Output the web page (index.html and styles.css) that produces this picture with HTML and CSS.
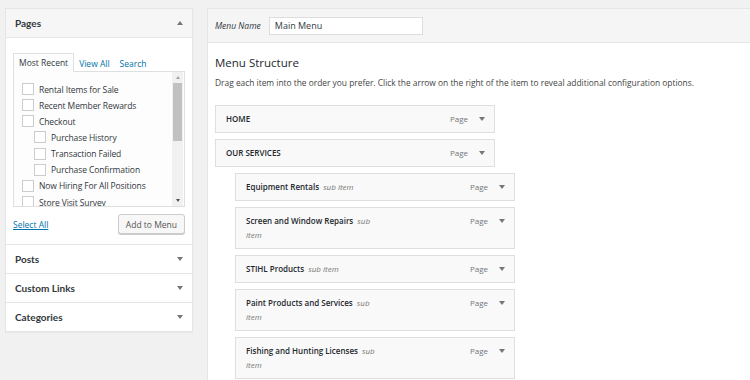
FILE: index.html
```html
<!DOCTYPE html>
<html lang="en">
<head>
    <meta charset="UTF-8">
    <title>Menus</title>
    <link rel="stylesheet" href="styles.css">
</head>
<body>
    <div class="page">

        <!-- Left column: add items -->
        <div class="sidebar">
            <div class="section open">
                <div class="section-head">
                    <span>Pages</span>
                    <span class="arrow up"></span>
                </div>
                <div class="section-body">
                    <div class="tabs">
                        <span class="tab active">Most Recent</span>
                        <span class="tab">View All</span>
                        <span class="tab">Search</span>
                    </div>
                    <div class="checklist">
                        <ul>
                            <li><span class="box"></span>Rental Items for Sale</li>
                            <li><span class="box"></span>Recent Member Rewards</li>
                            <li><span class="box"></span>Checkout</li>
                            <li class="child"><span class="box"></span>Purchase History</li>
                            <li class="child"><span class="box"></span>Transaction Failed</li>
                            <li class="child"><span class="box"></span>Purchase Confirmation</li>
                            <li><span class="box"></span>Now Hiring For All Positions</li>
                            <li><span class="box"></span>Store Visit Survey</li>
                        </ul>
                        <div class="scrollbar">
                            <span class="sb-up"></span>
                            <span class="sb-thumb"></span>
                            <span class="sb-down"></span>
                        </div>
                    </div>
                    <div class="actions">
                        <a href="#" class="select-all">Select All</a>
                        <button class="button">Add to Menu</button>
                    </div>
                </div>
            </div>
            <div class="section">
                <div class="section-head"><span>Posts</span><span class="arrow"></span></div>
            </div>
            <div class="section">
                <div class="section-head"><span>Custom Links</span><span class="arrow"></span></div>
            </div>
            <div class="section">
                <div class="section-head"><span>Categories</span><span class="arrow"></span></div>
            </div>
        </div>

        <!-- Right column: menu structure -->
        <div class="main">
            <div class="menu-header">
                <label class="menu-name-label">Menu Name</label>
                <input type="text" class="menu-name" value="Main Menu">
            </div>
            <div class="menu-body">
                <h3>Menu Structure</h3>
                <p class="hint">Drag each item into the order you prefer. Click the arrow on the right of the item to reveal additional configuration options.</p>

                <ul class="menu-items">
                    <li class="item">
                        <span class="item-title">HOME</span>
                        <span class="item-controls"><span class="item-type">Page</span><span class="arrow"></span></span>
                    </li>
                    <li class="item">
                        <span class="item-title">OUR SERVICES</span>
                        <span class="item-controls"><span class="item-type">Page</span><span class="arrow"></span></span>
                    </li>
                    <li class="item depth-1">
                        <span class="item-title">Equipment Rentals <em>sub item</em></span>
                        <span class="item-controls"><span class="item-type">Page</span><span class="arrow"></span></span>
                    </li>
                    <li class="item depth-1">
                        <span class="item-title">Screen and Window Repairs <em>sub item</em></span>
                        <span class="item-controls"><span class="item-type">Page</span><span class="arrow"></span></span>
                    </li>
                    <li class="item depth-1">
                        <span class="item-title">STIHL Products <em>sub item</em></span>
                        <span class="item-controls"><span class="item-type">Page</span><span class="arrow"></span></span>
                    </li>
                    <li class="item depth-1">
                        <span class="item-title">Paint Products and Services <em>sub item</em></span>
                        <span class="item-controls"><span class="item-type">Page</span><span class="arrow"></span></span>
                    </li>
                    <li class="item depth-1">
                        <span class="item-title">Fishing and Hunting Licenses <em>sub item</em></span>
                        <span class="item-controls"><span class="item-type">Page</span><span class="arrow"></span></span>
                    </li>
                </ul>
            </div>
        </div>
    </div>
</body>
</html>
```

FILE: styles.css
```css
/* Page */
body {
    margin: 0;
    background: #f1f1f1;
    font-family: "Open Sans", "Noto Sans", sans-serif;
    color: #23282d;
    font-size: 9px;
    overflow: hidden;
}
.page {
    display: flex;
    align-items: flex-start;
    padding: 8px 0 0 5px;
    height: 372px;
}

/* Sidebar */
.sidebar {
    width: 188px;
    background: #fff;
    border: 1px solid #e5e5e5;
    box-sizing: border-box;
    box-shadow: 0 1px 1px rgba(0, 0, 0, 0.04);
}
.section {
    border-top: 1px solid #e5e5e5;
}
.section:first-child {
    border-top: none;
}
.section-head {
    display: flex;
    justify-content: space-between;
    align-items: center;
    height: 28px;
    padding: 0 9px 0 9px;
    font-family: "Lato", sans-serif;
    font-weight: bold;
    font-size: 10px;
    color: #32373c;
}
.section.open .section-head {
    background: #f6f6f6;
    border-bottom: 1px solid #e5e5e5;
}
.arrow {
    width: 0;
    height: 0;
    border-left: 3.5px solid transparent;
    border-right: 3.5px solid transparent;
    border-top: 4px solid #72777c;
}
.arrow.up {
    border-top: none;
    border-bottom: 4px solid #72777c;
}
.section-body {
    padding: 16px 7px 10px 7px;
}
.tabs {
    display: flex;
    align-items: flex-end;
    height: 18px;
    margin-bottom: -1px;
    position: relative;
}
.tab {
    padding: 0 5px;
    color: #0073aa;
    line-height: 17px;
    font-size: 8.5px;
}
.tab.active {
    color: #32373c;
    border: 1px solid #dfdfdf;
    border-bottom: 1px solid #fdfdfd;
    background: #fdfdfd;
}
.checklist {
    display: flex;
    height: 134px;
    border: 1px solid #dfdfdf;
    background: #fdfdfd;
    overflow: hidden;
}
.checklist ul {
    flex: 1;
    list-style: none;
    margin: 0;
    padding: 9px 0 0 8px;
}
.checklist li {
    display: flex;
    align-items: center;
    height: 16.15px;
    white-space: nowrap;
    color: #32373c;
    font-size: 8.5px;
    letter-spacing: -0.1px;
}
.checklist li.child {
    padding-left: 12px;
}
.box {
    width: 10px;
    height: 10px;
    border: 1px solid #c9cdd0;
    background: #fff;
    margin-right: 5px;
    flex-shrink: 0;
}
.scrollbar {
    width: 11px;
    margin-right: 1px;
    background: #f1f1f1;
    display: flex;
    flex-direction: column;
    align-items: center;
}
.sb-up, .sb-down {
    width: 0;
    height: 0;
    border-left: 2.5px solid transparent;
    border-right: 2.5px solid transparent;
    margin: 4px 0;
}
.sb-up {
    border-bottom: 3px solid #a3a3a3;
}
.sb-down {
    border-top: 3px solid #505050;
    margin-top: auto;
}
.sb-thumb {
    width: 9px;
    height: 58px;
    background: #c1c1c1;
}
.actions {
    display: flex;
    justify-content: space-between;
    align-items: center;
    margin-top: 7px;
}
.select-all {
    color: #0073aa;
    font-size: 8.5px;
    text-decoration: underline;
}
.button {
    font-family: inherit;
    font-size: 8.5px;
    color: #555;
    background: #f7f7f7;
    border: 1px solid #ccc;
    border-radius: 3px;
    box-shadow: 0 1px 0 #ccc;
    height: 20px;
    padding: 0 7px;
}

/* Main column */
.main {
    flex: 1;
    margin-left: 14px;
    align-self: stretch;
    background: #fff;
    border: 1px solid #e5e5e5;
    border-right: none;
    border-bottom: none;
}
.menu-header {
    display: flex;
    align-items: center;
    height: 33px;
    padding-left: 7px;
    background: #f5f5f5;
    border-bottom: 1px solid #e5e5e5;
}
.menu-name-label {
    font-style: italic;
    font-size: 8.5px;
    color: #32373c;
    margin-right: 8px;
}
.menu-name {
    width: 154px;
    height: 18px;
    box-sizing: border-box;
    border: 1px solid #ddd;
    padding: 0 5px;
    font-family: inherit;
    font-size: 9px;
    color: #32373c;
}
.menu-body {
    padding: 12px 7px 0 7px;
}
.menu-body h3 {
    margin: 0;
    font-size: 11.5px;
    font-weight: 500;
    line-height: 16px;
}
.hint {
    margin: 5px 0 15px 0;
    font-size: 8.4px;
    line-height: 14px;
    color: #444;
    white-space: nowrap;
}
.menu-items {
    list-style: none;
    margin: 0;
    padding: 0;
}
.item {
    display: flex;
    justify-content: space-between;
    align-items: flex-start;
    width: 280px;
    box-sizing: border-box;
    margin-bottom: 6px;
    padding: 6px 0 6px 10px;
    line-height: 14px;
    background: #f9f9f9;
    border: 1px solid #dfdfdf;
}
.item.depth-1 {
    margin-left: 20px;
}
.item-title {
    font-weight: 600;
    font-size: 8px;
    max-width: 140px;
}
.item-title em {
    font-weight: normal;
    color: #777;
    margin-left: 2px;
}
.item-controls {
    display: flex;
    align-items: center;
    height: 14px;
}
.item-type {
    color: #72777c;
    font-size: 8px;
    margin-right: 11px;
}
.item-controls .arrow {
    margin-right: 9px;
}
```
